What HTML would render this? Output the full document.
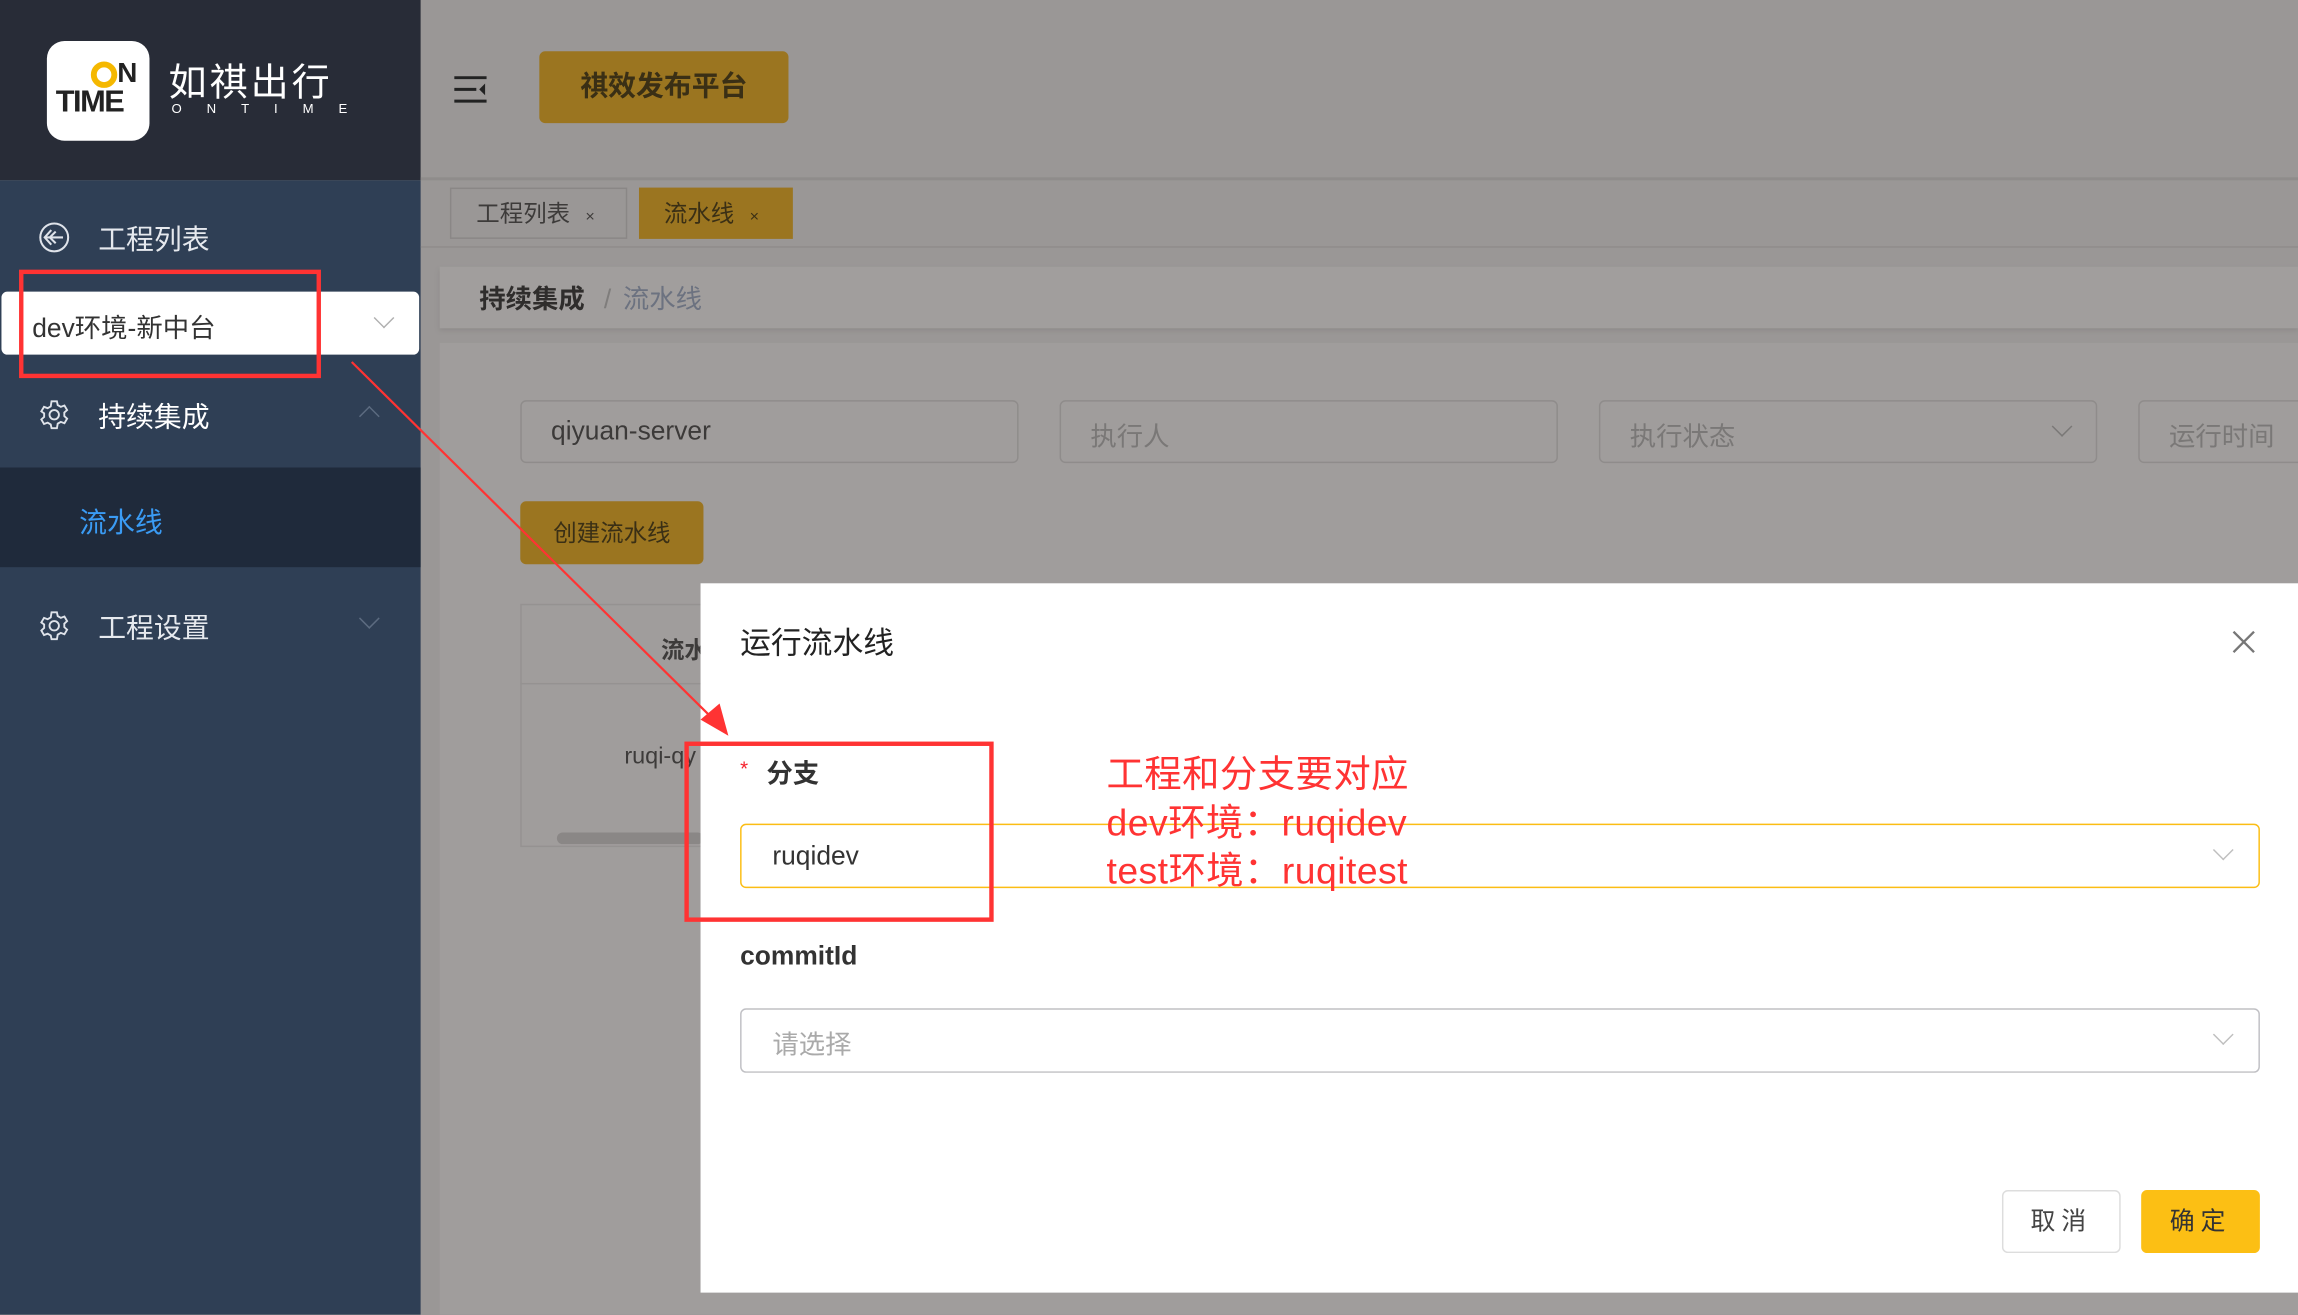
<!DOCTYPE html>
<html><head><meta charset="utf-8"><style>
*{box-sizing:border-box;margin:0;padding:0}
html,body{width:2298px;height:1315px;overflow:hidden;background:#9a9796}
#w{position:absolute;left:0;top:0;width:1568px;height:897px;transform:scale(1.46556);transform-origin:0 0;font-family:"Liberation Sans","Noto Sans CJK SC",sans-serif;background:#9a9796}
.a{position:absolute}
.inp{position:absolute;border:1px solid #8f8c8b;border-radius:4px;height:43px;top:273px;font-size:18px;color:#7a7877;padding:10px 20px}
.chev{position:absolute;width:10px;height:10px;border-right:1.5px solid #bfbfbf;border-bottom:1.5px solid #bfbfbf;transform:rotate(45deg)}
</style></head><body><div id="w">
<div class="a" style="left:0;top:0;width:287px;height:123px;background:#282c37"></div>
<div class="a" style="left:0;top:123px;width:287px;height:774px;background:#2f3f55"></div>
<div class="a" style="left:32px;top:28px;width:70px;height:68px;background:#fff;border-radius:12px"></div>
<div class="a" style="left:38px;top:58px;font-weight:bold;font-size:21px;color:#222;letter-spacing:-1px">TIME</div>
<div class="a" style="left:62px;top:42px;width:18px;height:18px;border:4px solid #f5b800;border-radius:50%"></div>
<div class="a" style="left:80px;top:40px;font-weight:bold;font-size:19px;color:#222">N</div>
<div class="a" style="left:115px;top:36px;font-size:26px;color:#fff;letter-spacing:2px">如祺出行</div>
<div class="a" style="left:117px;top:69px;font-size:9px;color:#fff;letter-spacing:17px">ONTIME</div>
<svg class="a" style="left:26px;top:151px" width="22" height="22" viewBox="0 0 22 22" fill="none" stroke="#dfe3ea" stroke-width="1.4"><circle cx="11" cy="11" r="9.5"/><path d="M9 6 L4.5 11 L9 16 M4.5 11 H17 M12 7 L8 11 L12 15"/></svg>
<div class="a" style="left:67px;top:149px;font-size:19px;color:#e6e9ee">工程列表</div>
<div class="a" style="left:1px;top:199px;width:285px;height:43px;background:#fff;border-radius:4px"></div>
<div class="a" style="left:22px;top:210px;font-size:18px;color:#333">dev环境-新中台</div>
<div class="chev" style="left:257px;top:212px;border-color:#b0b0b0"></div>
<svg class="a" style="left:26px;top:272px" width="22" height="22" viewBox="0 0 24 24" fill="none" stroke="#dfe3ea" stroke-width="1.4"><circle cx="12" cy="12" r="3.5"/><path d="M10 2h4l.6 2.8 2.3 1.3 2.7-1 2 3.4-2.1 1.9v2.6l2.1 1.9-2 3.4-2.7-1-2.3 1.3L14 22h-4l-.6-2.8-2.3-1.3-2.7 1-2-3.4 2.1-1.9v-2.6L2.4 9.5l2-3.4 2.7 1 2.3-1.3z"/></svg>
<div class="a" style="left:67px;top:270px;font-size:19px;color:#fff">持续集成</div>
<div class="chev" style="left:247px;top:279px;transform:rotate(225deg);border-color:#5c6b80"></div>
<div class="a" style="left:0;top:319px;width:287px;height:68px;background:#1f2a3b"></div>
<div class="a" style="left:54px;top:342px;font-size:19px;color:#3a9bf4">流水线</div>
<svg class="a" style="left:26px;top:416px" width="22" height="22" viewBox="0 0 24 24" fill="none" stroke="#dfe3ea" stroke-width="1.4"><circle cx="12" cy="12" r="3.5"/><path d="M10 2h4l.6 2.8 2.3 1.3 2.7-1 2 3.4-2.1 1.9v2.6l2.1 1.9-2 3.4-2.7-1-2.3 1.3L14 22h-4l-.6-2.8-2.3-1.3-2.7 1-2-3.4 2.1-1.9v-2.6L2.4 9.5l2-3.4 2.7 1 2.3-1.3z"/></svg>
<div class="a" style="left:67px;top:414px;font-size:19px;color:#e6e9ee">工程设置</div>
<div class="chev" style="left:247px;top:417px;border-color:#5c6b80"></div>
<svg class="a" style="left:309px;top:51px" width="24" height="20" viewBox="0 0 24 20" stroke="#222" stroke-width="2"><path d="M1 2H23M1 10H16M1 18H23"/><path d="M22 6L18 10L22 14Z" fill="#222" stroke="none"/></svg>
<div class="a" style="left:368px;top:35px;width:170px;height:49px;background:#9b7520;border-radius:4px;font-size:19px;font-weight:bold;color:#3a2f15;text-align:center;line-height:49px">祺效发布平台</div>
<div class="a" style="left:287px;top:121px;width:1281px;height:2px;background:#8f8c8b"></div>
<div class="a" style="left:307px;top:128px;width:121px;height:35px;border:1px solid #8a8786;font-size:16px;color:#3d3b3a;line-height:35px;padding-left:17px">工程列表 <span style="font-size:11px;margin-left:6px">×</span></div>
<div class="a" style="left:436px;top:128px;width:105px;height:35px;background:#9b7520;font-size:16px;color:#3a2f15;line-height:37px;padding-left:17px">流水线 <span style="font-size:11px;margin-left:6px">×</span></div>
<div class="a" style="left:287px;top:168px;width:1281px;height:1px;background:#8f8c8b"></div>
<div class="a" style="left:300px;top:182px;width:1268px;height:42px;background:#a19e9d;box-shadow:0 2px 3px #8e8b8a"></div>
<div class="a" style="left:327px;top:190px;font-size:18px;font-weight:bold;color:#2f2d2c">持续集成 <span style="font-weight:normal;color:#7f7d7c;margin:0 8px">/</span><span style="font-weight:normal;color:#6c7280">流水线</span></div>
<div class="a" style="left:300px;top:234px;width:1268px;height:663px;background:#a09d9c"></div>
<div class="inp" style="left:355px;width:340px;color:#3c3a39">qiyuan-server</div>
<div class="inp" style="left:723px;width:340px">执行人</div>
<div class="inp" style="left:1091px;width:340px">执行状态</div>
<div class="chev" style="left:1402px;top:286px;border-color:#7a7877"></div>
<div class="inp" style="left:1459px;width:140px">运行时间</div>
<div class="a" style="left:355px;top:342px;width:125px;height:43px;background:#9b7520;border-radius:4px;font-size:16px;color:#3a2f15;line-height:45px;text-align:center">创建流水线</div>
<div class="a" style="left:355px;top:412px;width:130px;height:166px;border:1px solid #959291"></div>
<div class="a" style="left:355px;top:466px;width:130px;height:1px;background:#959291"></div>
<div class="a" style="left:451px;top:430px;font-size:16px;font-weight:bold;color:#3d3b3a">流水</div>
<div class="a" style="left:426px;top:508px;font-size:16px;color:#3d3b3a">ruqi-qy</div>
<div class="a" style="left:380px;top:568px;width:100px;height:8px;background:#8a8786;border-radius:4px"></div>
<div class="a" style="left:478px;top:398px;width:1090px;height:484px;background:#fff"></div>
<div class="a" style="left:505px;top:423px;font-size:21px;color:#222">运行流水线</div>
<svg class="a" style="left:1523px;top:430px" width="16" height="16" stroke="#777" stroke-width="1.6"><path d="M1 1L15 15M15 1L1 15"/></svg>
<div class="a" style="left:505px;top:516px;font-size:14px;color:#f5222d">*</div>
<div class="a" style="left:523px;top:514px;font-size:18px;font-weight:bold;color:#333">分支</div>
<div class="a" style="left:505px;top:562px;width:1037px;height:44px;border:1px solid #fbbd14;border-radius:4px"></div>
<div class="a" style="left:527px;top:574px;font-size:18px;color:#333">ruqidev</div>
<div class="chev" style="left:1512px;top:575px"></div>
<div class="a" style="left:505px;top:642px;font-size:18px;font-weight:bold;color:#333">commitId</div>
<div class="a" style="left:505px;top:688px;width:1037px;height:44px;border:1px solid #c0c0c4;border-radius:4px"></div>
<div class="a" style="left:527px;top:699px;font-size:18px;color:#aaa">请选择</div>
<div class="chev" style="left:1512px;top:701px"></div>
<div class="a" style="left:1366px;top:812px;width:81px;height:43px;border:1px solid #ddd;border-radius:4px;font-size:17px;color:#444;line-height:41px;text-align:center;letter-spacing:4px">取消</div>
<div class="a" style="left:1461px;top:812px;width:81px;height:43px;background:#fcbf14;border-radius:4px;font-size:17px;color:#333;line-height:43px;text-align:center;letter-spacing:4px">确定</div>
<div class="a" style="left:13px;top:184px;width:206px;height:74px;border:3px solid #f33"></div>
<div class="a" style="left:467px;top:506px;width:211px;height:123px;border:3px solid #f33"></div>
<svg class="a" style="left:0;top:0" width="1568" height="897"><line x1="240" y1="247" x2="488" y2="492" stroke="#f33" stroke-width="1.5"/><path d="M497 502 L478 491 L491 480 Z" fill="#f33"/></svg>
<div class="a" style="left:755px;top:513px;font-size:25.5px;line-height:33px;color:#f33;letter-spacing:0.3px">工程和分支要对应<br>dev环境：ruqidev<br>test环境：ruqitest</div>
</div></body></html>
